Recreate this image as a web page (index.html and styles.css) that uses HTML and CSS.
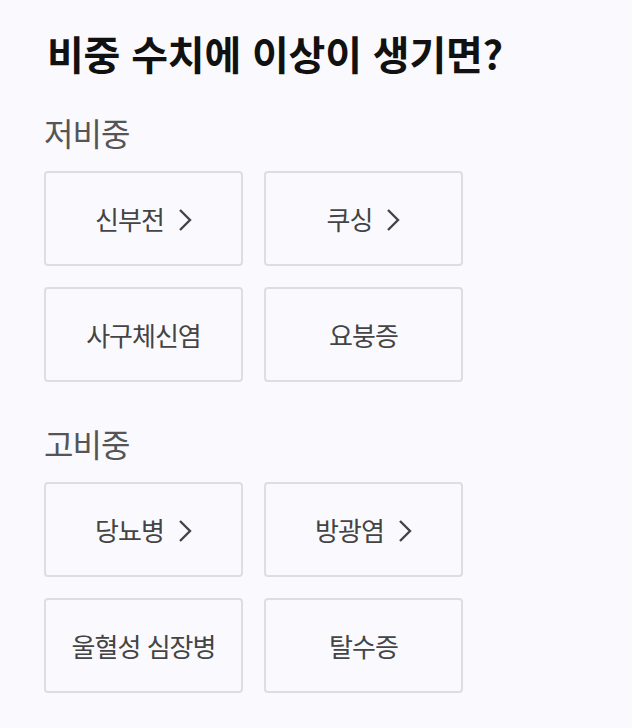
FILE: index.html
```html
<!DOCTYPE html>
<html lang="ko">
<head>
<meta charset="utf-8">
<link rel="stylesheet" href="styles.css">
</head>
<body>
<main class="page">
  <h1 class="title">비중 수치에 이상이 생기면?</h1>
  <section class="group group-low">
    <h2 class="group-title">저비중</h2>
    <div class="grid">
      <div class="item">신부전<span class="chev"><svg viewBox="0 0 14 24" width="14" height="24"><path d="M2 2 L12 12 L2 22" fill="none" stroke="#444" stroke-width="2.4"/></svg></span></div>
      <div class="item">쿠싱<span class="chev"><svg viewBox="0 0 14 24" width="14" height="24"><path d="M2 2 L12 12 L2 22" fill="none" stroke="#444" stroke-width="2.4"/></svg></span></div>
      <div class="item">사구체신염</div>
      <div class="item">요붕증</div>
    </div>
  </section>
  <section class="group group-high">
    <h2 class="group-title">고비중</h2>
    <div class="grid">
      <div class="item">당뇨병<span class="chev"><svg viewBox="0 0 14 24" width="14" height="24"><path d="M2 2 L12 12 L2 22" fill="none" stroke="#444" stroke-width="2.4"/></svg></span></div>
      <div class="item">방광염<span class="chev"><svg viewBox="0 0 14 24" width="14" height="24"><path d="M2 2 L12 12 L2 22" fill="none" stroke="#444" stroke-width="2.4"/></svg></span></div>
      <div class="item">울혈성 심장병</div>
      <div class="item">탈수증</div>
    </div>
  </section>
</main>
</body>
</html>
```
FILE: styles.css
```css
html, body {
  margin: 0;
  padding: 0;
  background: #f9f9fe;
}
body {
  font-family: "Noto Sans CJK KR", "Noto Sans", sans-serif;
  color: #444;
  width: 632px;
  height: 728px;
  overflow: hidden;
}
.page {
  padding: 27px 0 0 44px;
}
.title {
  margin: 0 0 0 3px;
  font-size: 40px;
  font-weight: 700;
  line-height: 53px;
  color: #111;
  letter-spacing: -0.2px;
}
.group-title {
  margin: 0;
  font-size: 32px;
  font-weight: 400;
  color: #555;
  line-height: 40px;
  letter-spacing: -1px;
}
.group-low .group-title {
  margin-top: 32px;
}
.group-high .group-title {
  margin-top: 41px;
}
.grid {
  display: grid;
  grid-template-columns: 199px 199px;
  column-gap: 21px;
  row-gap: 21px;
  margin-top: 19px;
}
.item {
  box-sizing: border-box;
  height: 95px;
  border: 2px solid #dddde2;
  border-radius: 4px;
  background: #fafafe;
  display: flex;
  align-items: center;
  justify-content: center;
  font-size: 26px;
  color: #444;
  letter-spacing: -1px;
}
.chev {
  display: inline-flex;
  margin-left: 14px;
  margin-top: 2px;
}
```
